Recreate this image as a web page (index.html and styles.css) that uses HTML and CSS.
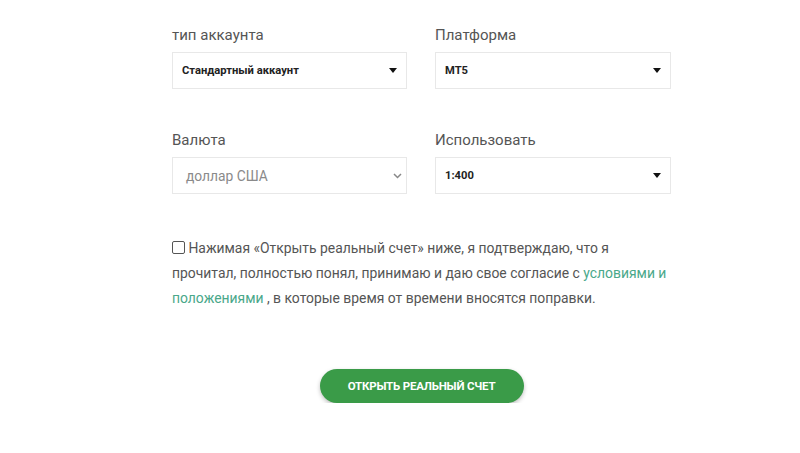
FILE: index.html
```html
<!DOCTYPE html>
<html lang="ru">
<head>
<meta charset="utf-8">
<link rel="stylesheet" href="styles.css">
</head>
<body>
<div class="form">
  <div class="grid">
    <div class="field">
      <div class="label">тип аккаунта</div>
      <div class="select">
        <span class="value">Стандартный аккаунт</span>
        <svg class="caret" width="8" height="5" viewBox="0 0 8 5"><path d="M0 0H8L4 5Z" fill="#111"/></svg>
      </div>
    </div>
    <div class="field">
      <div class="label">Платформа</div>
      <div class="select">
        <span class="value">MT5</span>
        <svg class="caret" width="8" height="5" viewBox="0 0 8 5"><path d="M0 0H8L4 5Z" fill="#111"/></svg>
      </div>
    </div>
    <div class="field">
      <div class="label">Валюта</div>
      <div class="select native">
        <span class="value muted">доллар США</span>
        <svg class="chev" width="9" height="6" viewBox="0 0 9 6"><path d="M1 1L4.5 4.5L8 1" fill="none" stroke="#888" stroke-width="1.5"/></svg>
      </div>
    </div>
    <div class="field">
      <div class="label">Использовать</div>
      <div class="select">
        <span class="value">1:400</span>
        <svg class="caret" width="8" height="5" viewBox="0 0 8 5"><path d="M0 0H8L4 5Z" fill="#111"/></svg>
      </div>
    </div>
  </div>
  <p class="agree"><span class="box"></span> Нажимая «Открыть реальный счет» ниже, я подтверждаю, что я<br>прочитал, полностью понял, принимаю и даю свое согласие с <a href="#">условиями и</a><br><a href="#">положениями</a> , в которые время от времени вносятся поправки.</p>
  <div class="actions"><button class="btn">ОТКРЫТЬ РЕАЛЬНЫЙ СЧЕТ</button></div>
</div>
</body>
</html>
```
FILE: styles.css
```css
html, body { margin: 0; padding: 0; background: #fff; }
body { font-family: Roboto, "Noto Sans", sans-serif; color: #555; }
.form { width: 499px; margin: 0 0 0 172px; padding-top: 26px; }
.grid { display: grid; grid-template-columns: 235px 236px; column-gap: 28px; row-gap: 42px; }
.label { font-size: 15px; line-height: 19px; color: #555; margin-bottom: 7px; }
.select { height: 37px; box-sizing: border-box; border: 1px solid #e8e8e8; display: flex; align-items: center; justify-content: space-between; padding: 0 9px 0 9px; background: #fff; }
.value { font-size: 11.2px; font-weight: 700; color: #222; }
.value.muted { font-size: 13.8px; font-weight: 400; color: #8a8a8a; padding-left: 4px; }
.native { padding-right: 4px; }
.caret { margin-right: 0; }
.agree { margin: 42px 0 0; font-size: 13.9px; line-height: 25px; color: #555; white-space: nowrap; }
.box { display: inline-block; width: 11px; height: 11px; border: 1px solid #555; border-radius: 2px; vertical-align: -1px; margin-right: 0; }
.agree a { color: #4aa88a; text-decoration: none; }
.actions { display: flex; justify-content: center; margin-top: 58px; }
.btn { width: 204px; height: 34px; border: none; border-radius: 17px; background: #3a9b48; color: #fff; font-family: Roboto, sans-serif; font-weight: 700; font-size: 11.5px; box-shadow: 0 2px 4px rgba(0,0,0,0.25); letter-spacing: -0.2px; }
```
